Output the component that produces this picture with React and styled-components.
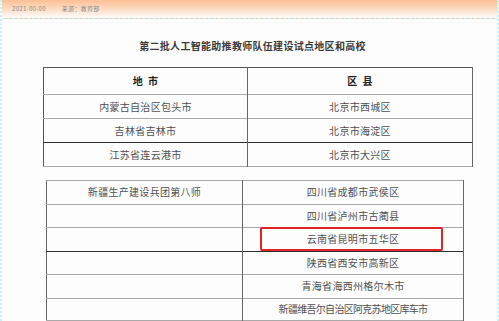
import React from 'react'
import styled, { createGlobalStyle } from 'styled-components'

const GlobalStyle = createGlobalStyle`
    html, body {
        margin: 0;
        padding: 0;
        background: #fdfdfd;
    }
    body {
        font-family: "Noto Sans CJK SC", "Noto Sans", sans-serif;
    }
`

const firstRows = [
    ['内蒙古自治区包头市', '北京市西城区', false],
    ['吉林省吉林市', '北京市海淀区', true],
    ['江苏省连云港市', '北京市大兴区', false],
]

const secondRows = [
    ['新疆生产建设兵团第八师', '四川省成都市武侯区', false, false],
    ['', '四川省泸州市古蔺县', false, false],
    ['', '云南省昆明市五华区', true, true],
    ['', '陕西省西安市高新区', false, false],
    ['', '青海省海西州格尔木市', false, false],
    ['', '新疆维吾尔自治区阿克苏地区库车市', false, false],
]

const App = () => {
  return (
    <Page>
        <GlobalStyle />
        <TopBand>
            <Meta>2021-00-00</Meta>
            <Meta>来源：教育部</Meta>
        </TopBand>
        <Title>第二批人工智能助推教师队伍建设试点地区和高校</Title>

        <FirstTable>
            <colgroup>
                <col style={{ width: 204 }} />
                <col />
            </colgroup>
            <tbody>
                <Row $height={27}>
                    <Cell $head>地&nbsp;&nbsp;市</Cell>
                    <Cell $head>区&nbsp;&nbsp;县</Cell>
                </Row>
                {firstRows.map(([city, district, dark], i) => (
                    <Row key={i} $height={24} $dark={dark}>
                        <Cell>{city}</Cell>
                        <Cell>{district}</Cell>
                    </Row>
                ))}
            </tbody>
        </FirstTable>

        <SecondTable>
            <colgroup>
                <col style={{ width: 196 }} />
                <col />
            </colgroup>
            <tbody>
                {secondRows.map(([city, district, dark, marked], i) => (
                    <Row key={i} $height={i === 5 ? 22 : 23.5} $dark={dark}>
                        <Cell>{city}</Cell>
                        <Cell $tight={district.length > 12}>
                            {district}
                            {marked && <Highlight />}
                        </Cell>
                    </Row>
                ))}
            </tbody>
        </SecondTable>
    </Page>
  )
}

const Page = styled.div`
    width: 499px;
    height: 321px;
    box-sizing: border-box;
    overflow: hidden;
    border-left: 2px dotted #c4f1f6;
    border-right: 2px dotted #c4f1f6;
    background: #fdfdfd;
`

const TopBand = styled.div`
    height: 17px;
    display: flex;
    align-items: center;
    gap: 16px;
    padding-left: 10px;
    padding-bottom: 1px;
    background: linear-gradient(to bottom, #fbbf94 0%, #fcd9bd 45%, #fdfdfd 100%);
    border-bottom: 1px dashed #bdeff5;
`

const Meta = styled.span`
    font-size: 6px;
    color: #8a8a8a;
    letter-spacing: 0.3px;
`

const Title = styled.div`
    margin-top: 20px;
    text-align: center;
    font-size: 10px;
    line-height: 14px;
    font-weight: bold;
    color: #3a3a3a;
    letter-spacing: 0.3px;
    padding-left: 6px;
`

const FirstTable = styled.table`
    margin-top: 14px;
    margin-left: 41px;
    width: 430px;
    border-collapse: collapse;
    table-layout: fixed;
    border: 1px solid #555;
`

const SecondTable = styled.table`
    margin-top: 13px;
    margin-left: 44px;
    width: 418px;
    border-collapse: collapse;
    table-layout: fixed;
    border: 1px solid #666;
    border-top: 1px solid #a8a8a8;
`

const Row = styled.tr`
    height: ${p => p.$height}px;
    border-bottom: 1px solid ${p => (p.$dark ? '#2e2e2e' : '#a9a9a9')};
`

const Cell = styled.td`
    position: relative;
    padding: 0;
    text-align: center;
    vertical-align: middle;
    font-size: 10px;
    line-height: 12px;
    letter-spacing: ${p => (p.$tight ? '-0.7px' : '0.3px')};
    color: ${p => (p.$head ? '#1e1e1e' : '#505050')};
    font-weight: ${p => (p.$head ? 'bold' : 'normal')};
    border-right: 1px solid #666;
    white-space: nowrap;
`

const Highlight = styled.span`
    position: absolute;
    left: 17px;
    top: -1px;
    width: 179px;
    height: 20px;
    border: 2px solid #e3232a;
    border-radius: 2px;
`

export default App
